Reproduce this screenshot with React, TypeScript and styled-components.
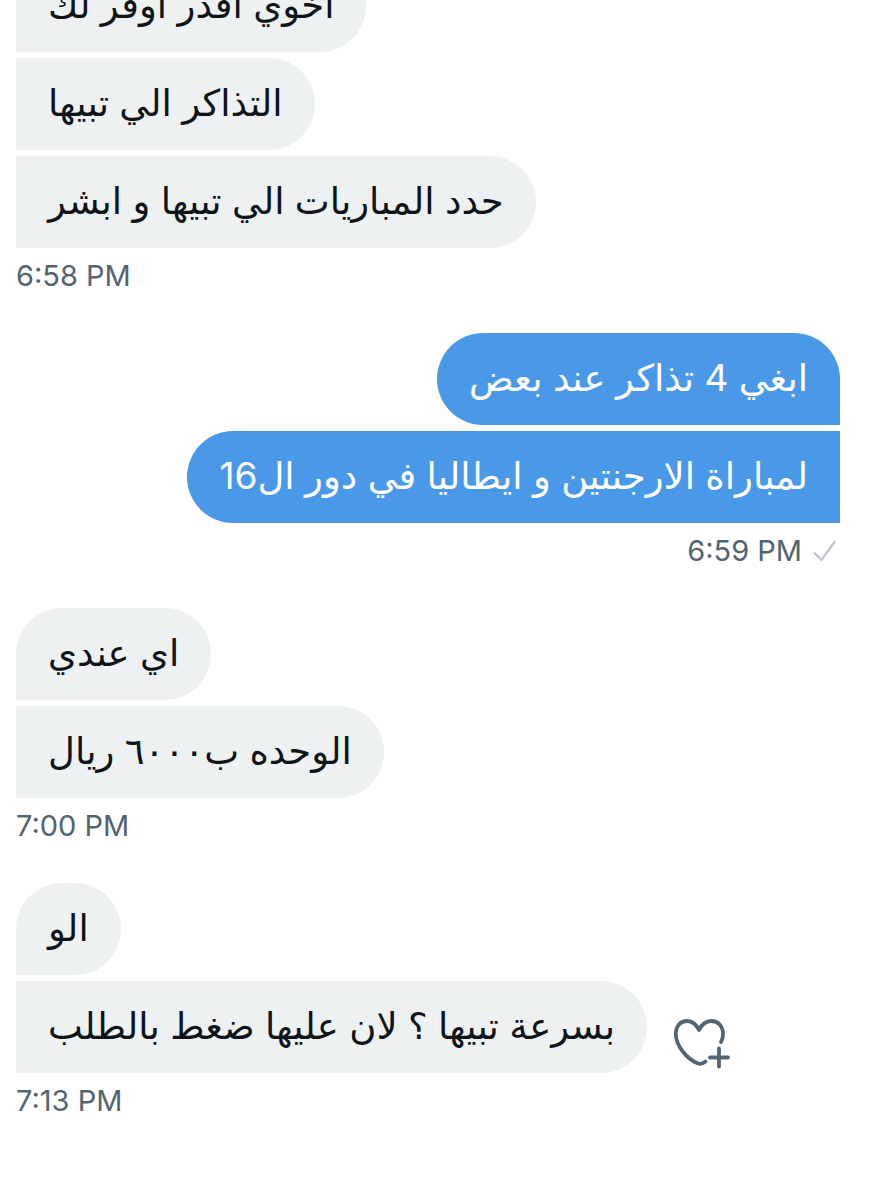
import React from "react";
import styled, { createGlobalStyle } from "styled-components";

const Global = createGlobalStyle`
  *, *::before, *::after { box-sizing: border-box; }
  body { margin: 0; background: #fff; font-family: Inter, "DejaVu Sans", sans-serif; }
`;

const Conversation = styled.main`
  display: flex;
  flex-direction: column;
  gap: 36px;
  padding: 0 50px 0 16px;
  margin-top: -40px;
  overflow: hidden;
`;

const Group = styled.section<{ $own?: boolean }>`
  display: flex;
  flex-direction: column;
  align-items: ${(p) => (p.$own ? "flex-end" : "flex-start")};
  gap: 6px;
`;

const Row = styled.div`
  display: flex;
  align-items: flex-end;
  gap: 24px;
`;

const Bubble = styled.p<{ $own?: boolean; $first?: boolean }>`
  margin: 0;
  padding: 0 32px 2px;
  line-height: 90px;
  font-size: 37px;
  white-space: nowrap;
  color: ${(p) => (p.$own ? "#fff" : "#0f1419")};
  background: ${(p) => (p.$own ? "#4a99e9" : "#edf1f2")};
  border-radius: ${(p) =>
    p.$own
      ? `46px ${p.$first ? "46px" : "0"} 0 46px`
      : `${p.$first ? "46px" : "0"} 46px 46px 0`};
`;

const Meta = styled.div`
  display: flex;
  align-items: center;
  gap: 8px;
  font-size: 29px;
  line-height: 43px;
  color: #536471;
`;

const ReactButton = styled.button`
  display: flex;
  padding: 0;
  border: 0;
  background: none;
  color: #536471;
  cursor: pointer;
`;

const Check = () => (
  <svg width="30" height="30" viewBox="0 0 30 30" fill="none" stroke="#b9c6ce" strokeWidth="2.2" strokeLinecap="round" aria-hidden="true">
    <path d="M4.500 17L11.500 24L24.500 6" />
  </svg>
);

const HeartPlus = () => (
  <svg width="60" height="60" viewBox="0 0 60 60" fill="none" stroke="currentColor" strokeWidth="3.8" strokeLinecap="round" strokeLinejoin="round" aria-hidden="true">
    <path d="M34.500 48.500C32 50.500 30 51.500 27 50.500C15 45.500 4.800 32 4.800 21C4.800 13 9.500 8 16 8C21.500 8 25 11 28 17C31 11 35 8 40.500 8C47 8 52 13 52 21C52 24 51.500 26.500 50 29" />
    <path d="M48 35.500V53.500M39 44.500H57" />
  </svg>
);

type Message = { text: string; reactable?: boolean };
type Block = { time: string; own?: boolean; messages: Message[] };

const blocks: Block[] = [
  { time: "6:58 PM", messages: [{ text: "اخوي اقدر اوفر لك" }, { text: "التذاكر الي تبيها" }, { text: "حدد المباريات الي تبيها و ابشر" }] },
  { time: "6:59 PM", own: true, messages: [{ text: "ابغي 4 تذاكر عند بعض" }, { text: "لمباراة الارجنتين و ايطاليا في دور ال16" }] },
  { time: "7:00 PM", messages: [{ text: "اي عندي" }, { text: "الوحده ب٦٠٠٠ ريال" }] },
  { time: "7:13 PM", messages: [{ text: "الو" }, { text: "بسرعة تبيها ؟ لان عليها ضغط بالطلب", reactable: true }] },
];

export default function App() {
  return (
    <>
      <Global />
      <Conversation>
        {blocks.map((block) => (
          <Group key={block.time} $own={block.own}>
            {block.messages.map((m, i) => (
              <Row key={m.text}>
                <Bubble dir="rtl" lang="ar" $own={block.own} $first={i === 0}>{m.text}</Bubble>
                {m.reactable && <ReactButton aria-label="Add reaction"><HeartPlus /></ReactButton>}
              </Row>
            ))}
            <Meta><time>{block.time}</time>{block.own && <Check />}</Meta>
          </Group>
        ))}
      </Conversation>
    </>
  );
}
